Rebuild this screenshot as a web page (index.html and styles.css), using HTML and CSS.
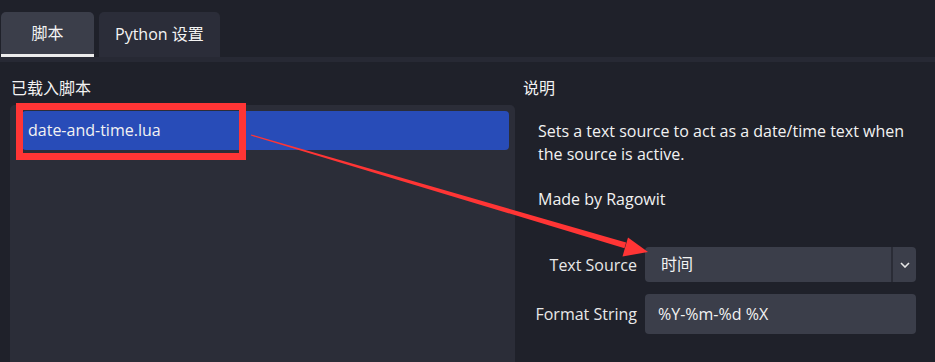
FILE: index.html
```html
<!DOCTYPE html>
<html lang="zh-CN">
<head>
    <meta charset="UTF-8">
    <title>脚本</title>
    <meta name="viewport" content="width=device-width, initial-scale=1">
    <link rel="stylesheet" href="styles.css">
</head>
<body>
<div class="tabs">
    <div class="tab active">脚本</div>
    <div class="tab">Python 设置</div>
</div>
<div class="tab-rule"></div>

<div class="main">
    <section class="scripts">
        <h2 class="section-title">已载入脚本</h2>
        <ul class="script-list">
            <li class="selected">date-and-time.lua</li>
        </ul>
    </section>

    <section class="details">
        <h2 class="section-title">说明</h2>
        <div class="desc">
            <p>Sets a text source to act as a date/time text when the source is active.</p>
            <p>Made by Ragowit</p>
        </div>
        <div class="props">
            <label>Text Source</label>
            <div class="combo">
                <span class="combo-value">时间</span>
                <span class="combo-btn">
                    <svg width="10" height="6" viewBox="0 0 10 6"><path d="M1 1 L5 5 L9 1" fill="none" stroke="#e6e6e6" stroke-width="1.6"/></svg>
                </span>
            </div>
            <label>Format String</label>
            <div class="field">%Y-%m-%d %X</div>
        </div>
    </section>
</div>

<!-- red markup drawn over the screenshot -->
<svg class="markup" width="935" height="362" viewBox="0 0 935 362">
    <rect x="19.5" y="106.5" width="223" height="50" fill="none" stroke="#ff3535" stroke-width="7"/>
    <polygon points="251.2,134.4 250.8,135.6 624.5,248.2 626.1,242.4" fill="#ff3535"/>
    <polygon points="648,252 622.5,256.5 628,237.5" fill="#ff3535"/>
</svg>
</body>
</html>
```
FILE: styles.css
```css
body {
    margin: 0;
    background: #1f212a;
    color: #f2f2f2;
    font-family: "Open Sans", "Noto Sans CJK SC", sans-serif;
    font-size: 16px;
    width: 935px;
    height: 362px;
    overflow: hidden;
    position: relative;
}
.tabs {
    display: flex;
    gap: 5px;
    padding: 12px 0 0 1px;
    height: 45px;
}
.tab {
    min-width: 93px;
    padding: 0 16px;
    height: 45px;
    line-height: 44px;
    text-align: center;
    background: #2b2d39;
    border-radius: 5px 5px 0 0;
    box-sizing: border-box;
    color: #f4f4f4;
}
.tab.active {
    background: #3b3e4a;
    border-bottom: 3px solid #ececec;
    line-height: 42px;
}
.tab-rule {
    height: 5px;
    background: #272934;
}
.main {
    display: flex;
    gap: 8px;
    padding: 16px 0 0 10px;
}
.section-title {
    font-size: 16px;
    font-weight: normal;
    line-height: 20px;
    margin: 0;
}
.scripts {
    width: 505px;
}
.scripts .section-title {
    padding-left: 1px;
}
.script-list {
    list-style: none;
    margin: 7px 0 0;
    padding: 6px 6px 6px 12px;
    height: 260px;
    background: #2b2d38;
    border-radius: 5px 5px 0 0;
}
.script-list li {
    height: 39px;
    line-height: 38px;
    padding-left: 6px;
    border-radius: 4px;
}
.script-list li.selected {
    background: #284cb8;
}
.details {
    flex: 1;
    padding-right: 19px;
}
.desc {
    margin-top: 22px;
    padding-left: 15px;
    line-height: 23px;
}
.desc p {
    margin: 0 0 22px;
}
.props {
    display: grid;
    grid-template-columns: 114px 1fr;
    column-gap: 8px;
    row-gap: 12px;
    align-items: center;
    margin-top: 36px;
}
.props label {
    text-align: right;
    color: #e8e8e8;
}
.combo {
    display: flex;
    height: 35px;
    background: #3b3e4a;
    border-radius: 4px;
    overflow: hidden;
}
.combo-value {
    flex: 1;
    padding-left: 16px;
    line-height: 35px;
    border-right: 2px solid #2a2c36;
}
.combo-btn {
    width: 23px;
    display: flex;
    align-items: center;
    justify-content: center;
}
.field {
    height: 40px;
    line-height: 40px;
    padding-left: 13px;
    background: #3b3e4a;
    border-radius: 4px;
}
.markup {
    position: absolute;
    top: 0;
    left: 0;
    pointer-events: none;
}
```
